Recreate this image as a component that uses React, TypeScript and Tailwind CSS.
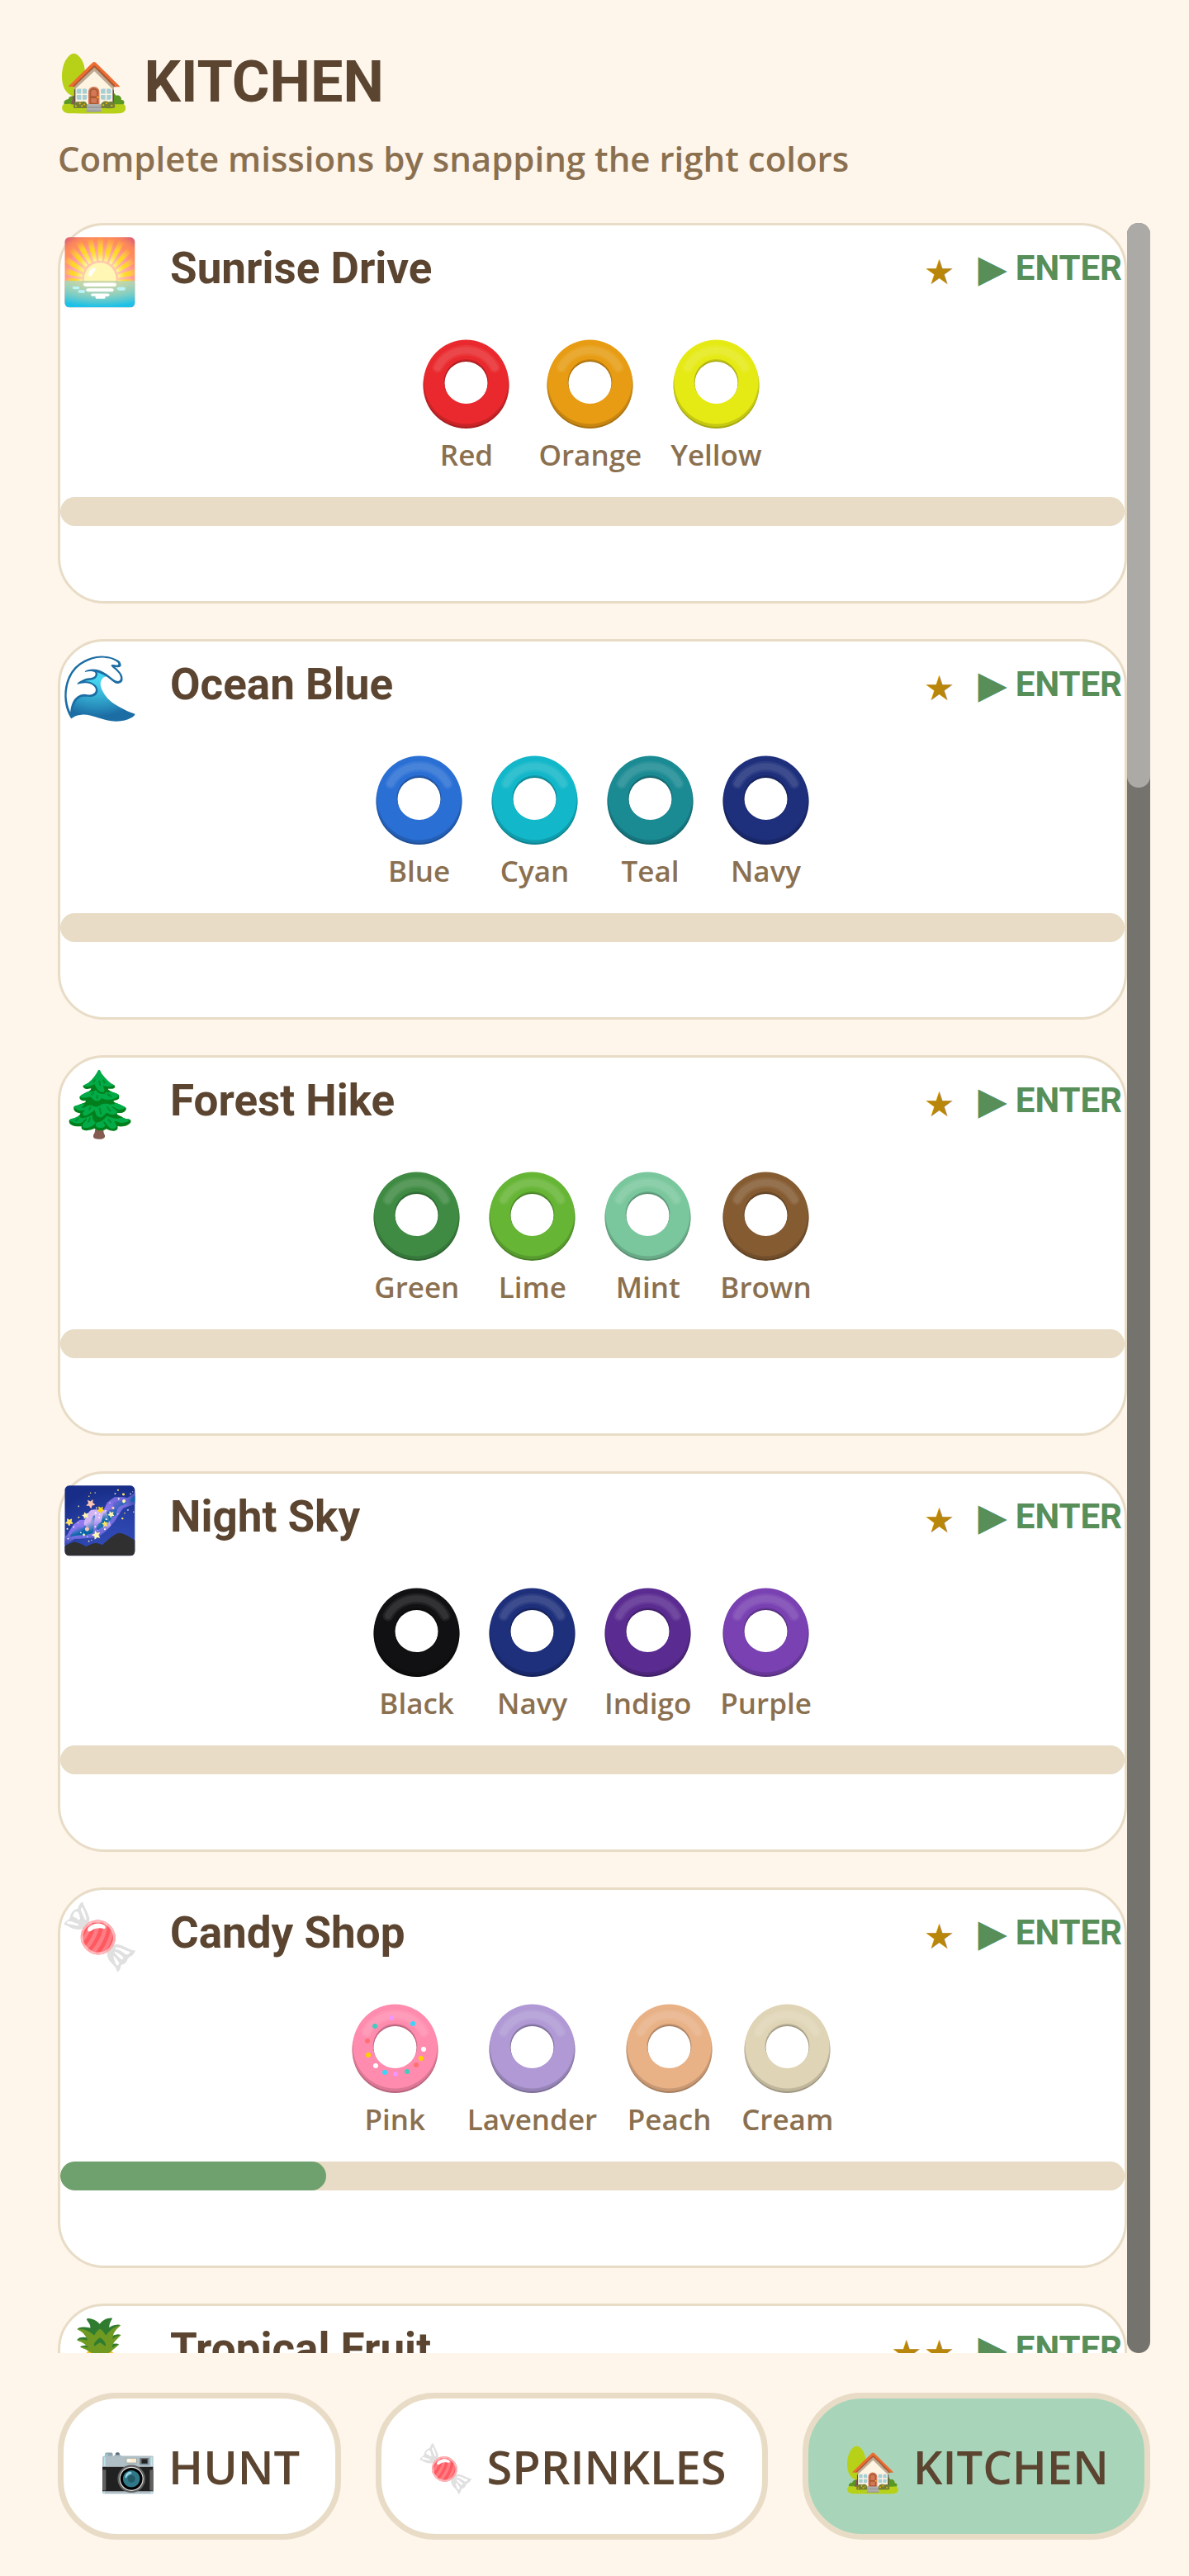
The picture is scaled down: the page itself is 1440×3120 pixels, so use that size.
import React from 'react';

interface Swatch {
  name: string;
  color: string;
  shade: string;
  sprinkles?: boolean;
}

interface Mission {
  icon: string;
  title: string;
  stars: number;
  progress: number;
  swatches: Swatch[];
}

const missions: Mission[] = [
  {
    icon: '🌅',
    title: 'Sunrise Drive',
    stars: 1,
    progress: 0,
    swatches: [
      { name: 'Red', color: '#e9292d', shade: '#a81d20' },
      { name: 'Orange', color: '#e79c13', shade: '#a8700f' },
      { name: 'Yellow', color: '#e6ea14', shade: '#a6a80f' }
    ]
  },
  {
    icon: '🌊',
    title: 'Ocean Blue',
    stars: 1,
    progress: 0,
    swatches: [
      { name: 'Blue', color: '#2a6fd4', shade: '#1e4f98' },
      { name: 'Cyan', color: '#12b7c9', shade: '#0d8390' },
      { name: 'Teal', color: '#1a8a93', shade: '#12636a' },
      { name: 'Navy', color: '#1e2f7b', shade: '#152158' }
    ]
  },
  {
    icon: '🌲',
    title: 'Forest Hike',
    stars: 1,
    progress: 0,
    swatches: [
      { name: 'Green', color: '#3f8b43', shade: '#2d6430' },
      { name: 'Lime', color: '#66b535', shade: '#498226' },
      { name: 'Mint', color: '#7ac79d', shade: '#588f71' },
      { name: 'Brown', color: '#855b32', shade: '#5f4124' }
    ]
  },
  {
    icon: '🌌',
    title: 'Night Sky',
    stars: 1,
    progress: 0,
    swatches: [
      { name: 'Black', color: '#111113', shade: '#0a0a0b' },
      { name: 'Navy', color: '#1e2f7b', shade: '#152158' },
      { name: 'Indigo', color: '#5a2b90', shade: '#401e67' },
      { name: 'Purple', color: '#7941b2', shade: '#572f80' }
    ]
  },
  {
    icon: '🍬',
    title: 'Candy Shop',
    stars: 1,
    progress: 25,
    swatches: [
      { name: 'Pink', color: '#ff8cae', shade: '#b8647d', sprinkles: true },
      { name: 'Lavender', color: '#b099d4', shade: '#7e6e98' },
      { name: 'Peach', color: '#e8b186', shade: '#a77f60' },
      { name: 'Cream', color: '#dfd4b5', shade: '#a09882' }
    ]
  },
  { icon: '🍍', title: 'Tropical Fruit', stars: 2, progress: 0, swatches: [] }
];

const tabs = [
  { icon: '📷', label: 'HUNT' },
  { icon: '🍬', label: 'SPRINKLES' },
  { icon: '🏡', label: 'KITCHEN' }
];

const sprinkles = [
  { x: 48, y: 19, fill: '#f296ff' },
  { x: 74, y: 26, fill: '#38d6ff' },
  { x: 28, y: 29, fill: '#40ccbf' },
  { x: 19, y: 47, fill: '#ff7070' },
  { x: 20, y: 64, fill: '#ffd000' },
  { x: 29, y: 77, fill: '#ffffff' },
  { x: 40, y: 85, fill: '#38d6ff' },
  { x: 53, y: 87, fill: '#f296ff' },
  { x: 67, y: 84, fill: '#40ccbf' },
  { x: 78, y: 76, fill: '#ff7070' },
  { x: 84, y: 68, fill: '#ffd000' },
  { x: 87, y: 57, fill: '#ffffff' }
];

const Donut: React.FC<{ swatch: Swatch }> = ({ swatch }) => (
  <svg className="h-28 w-[105px]" viewBox="0 0 105 112" aria-hidden="true">
    {/* Underside */}
    <path
      fill={swatch.shade}
      fillRule="evenodd"
      d="M0.5 58a52 52 0 1 0 104 0a52 52 0 1 0 -104 0zM26.5 55a26 26 0 1 0 52 0a26 26 0 1 0 -52 0z"
    />
    {/* Glaze, with a half-tone rim below it */}
    <path
      fill={swatch.color}
      fillOpacity="0.5"
      fillRule="evenodd"
      d="M0.5 56a52 52 0 1 0 104 0a52 52 0 1 0 -104 0zM26 54a26.5 26.5 0 1 0 53 0a26.5 26.5 0 1 0 -53 0z"
    />
    <path
      fill={swatch.color}
      fillRule="evenodd"
      d="M1.5 53.5a51 51 0 1 0 102 0a51 51 0 1 0 -102 0zM25.5 53a27 27 0 1 0 54 0a27 27 0 1 0 -54 0z"
    />
    {/* Shine */}
    <g fill="none" stroke="#ffffff" strokeLinecap="round">
      <path d="M18 36A39 39 0 0 1 87 36" strokeOpacity="0.07" strokeWidth="13" />
      <path d="M18 36A39 39 0 0 1 87 36" strokeOpacity="0.08" strokeWidth="8" />
    </g>
    {swatch.sprinkles &&
      sprinkles.map(dot => <circle key={`${dot.x}-${dot.y}`} cx={dot.x} cy={dot.y} r="3" fill={dot.fill} />)}
  </svg>
);

const MissionCard: React.FC<{ mission: Mission }> = ({ mission }) => (
  <article className="min-h-[461px] shrink-0 rounded-[56px] border-3 border-[#e8dcc6] bg-white">
    <div className="flex h-26 items-center pr-[3px] font-['Roboto',sans-serif] font-bold">
      <span className="w-[133px] pt-2.5 text-[77px] leading-none">{mission.icon}</span>
      <h2 className="flex-1 text-[53px] leading-[60px] text-[#5b4530]">{mission.title}</h2>
      <span className="flex gap-0.5 pt-2.5 font-['DejaVu_Sans',sans-serif] text-[42px] leading-none font-normal text-[#b8860b]">
        {Array.from({ length: mission.stars }, (_, i) => (
          <span key={i}>★</span>
        ))}
      </span>
      <button className="ml-7 flex items-center gap-2.5 text-[42px] leading-[50px] text-[#588e58]">
        <span className="font-['DejaVu_Sans',sans-serif] text-[46px]">▶</span>
        <span>ENTER</span>
      </button>
    </div>

    <ul className="mt-8 flex justify-center gap-[35px]">
      {mission.swatches.map(swatch => (
        <li key={swatch.name} className="flex min-w-[105px] flex-col items-center">
          <Donut swatch={swatch} />
          <span className="mt-1.5 text-[35px] leading-[48px] text-[#8b7050]">{swatch.name}</span>
        </li>
      ))}
    </ul>

    <div
      role="progressbar"
      aria-label={mission.title}
      aria-valuenow={mission.progress}
      className="mt-[27px] h-[35px] overflow-hidden rounded-full bg-[#e8dcc6]"
    >
      <div className="h-full rounded-full bg-[#6fa16f]" style={{ width: `${mission.progress}%` }}></div>
    </div>
  </article>
);

export default function App() {
  return (
    <div className="flex h-screen flex-col bg-[#fef5eb] pt-[58px] pr-[47px] pb-11 pl-[70px] font-['Open_Sans',sans-serif] font-semibold">
      <header className="mb-[50px]">
        <h1 className="font-['Roboto',sans-serif] text-[70px] leading-[82px] font-bold text-[#5b4530]">🏡 KITCHEN</h1>
        <p className="mt-[23px] text-[42px] leading-[57px] text-[#8b7050]">
          Complete missions by snapping the right colors
        </p>
      </header>

      <main className="flex min-h-0 flex-1">
        <div className="flex flex-1 flex-col gap-[43px] overflow-hidden">
          {missions.map(mission => (
            <MissionCard key={mission.title} mission={mission} />
          ))}
        </div>
        {/* Scrollbar */}
        <div className="w-7 rounded-full bg-[#75736d]">
          <div className="h-[26.5%] rounded-full bg-[#abaaa6]"></div>
        </div>
      </main>

      <nav className="mt-12 flex gap-[42px]">
        {tabs.map(tab => (
          <button
            key={tab.label}
            className={`flex h-[178px] flex-auto items-center justify-center gap-3.5 rounded-[72px] border-7 border-[#e8dcc6] text-[56px] text-[#5b4530] ${
              tab.label === 'KITCHEN' ? 'bg-[#a8d5ba]' : 'bg-white'
            }`}
          >
            <span>{tab.icon}</span>
            <span>{tab.label}</span>
          </button>
        ))}
      </nav>
    </div>
  );
}
